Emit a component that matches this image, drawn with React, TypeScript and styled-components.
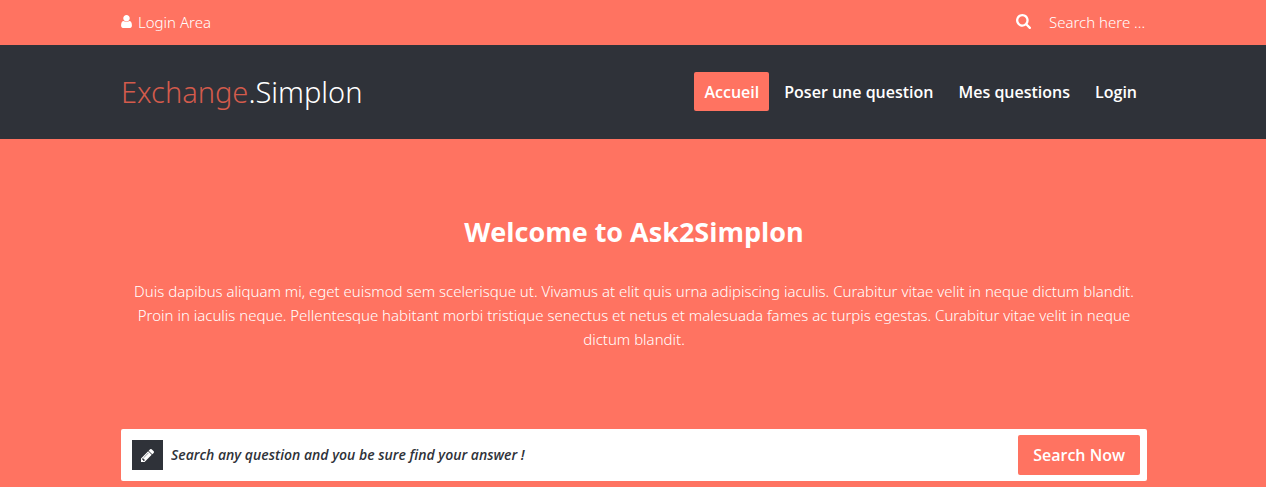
import React from "react";
import styled, { createGlobalStyle } from "styled-components";

const coral = "#ff7361";
const dark = "#2f3239";
const strongFont = `"Open Sans", sans-serif`;

const GlobalStyle = createGlobalStyle`
  * { box-sizing: border-box; }
  body {
    margin: 0;
    background: ${coral};
    color: #fff;
    font-family: "Noto Sans", "Open Sans", sans-serif;
    font-size: 15px;
    font-weight: 300;
  }
  a { color: inherit; text-decoration: none; }
  input, button { font-family: inherit; font-weight: inherit; border: 0; outline: 0; }
`;

const Container = styled.div`
  max-width: 1028px;
  margin: 0 auto;
  padding-left: 2px;
`;

const TopBar = styled(Container)`
  display: flex;
  justify-content: space-between;
  align-items: center;
  height: 45px;
  padding-bottom: 2px;
`;

const LoginLink = styled.a`
  display: flex;
  align-items: center;
  gap: 6px;
  line-height: 24px;
`;

const TopSearch = styled.label`
  display: flex;
  align-items: center;
  gap: 18px;
`;

const TopInput = styled.input`
  width: 98px;
  padding: 0;
  background: transparent;
  color: #fff;
  font-size: 15px;
  line-height: 24px;
  &::placeholder { color: #fff; opacity: 1; }
`;

const Icon = styled.svg`
  display: block;
  flex: none;
  fill: currentColor;
`;

const Header = styled.header`
  background: ${dark};
`;

const HeaderInner = styled(Container)`
  display: flex;
  justify-content: space-between;
  align-items: center;
  height: 94px;
`;

const Logo = styled.a`
  font-size: 29px;
  line-height: 40px;
`;

const LogoAccent = styled.span`
  color: #d35b4c;
`;

const Nav = styled.nav`
  display: flex;
  gap: 5px;
  padding-bottom: 1px;
`;

const NavLink = styled.a<{ $active?: boolean }>`
  padding: 1px 10px 0;
  border-radius: 2px;
  background: ${(p) => (p.$active ? coral : "transparent")};
  font-family: ${strongFont};
  font-size: 16px;
  font-weight: 600;
  line-height: 38px;
`;

const Hero = styled(Container)`
  padding-top: 72px;
  padding-bottom: 6px;
  text-align: center;
`;

const Title = styled.h1`
  margin: 0 0 27px;
  font-family: ${strongFont};
  font-size: 27px;
  font-weight: 700;
  line-height: 41px;
`;

const Intro = styled.p`
  margin: 0 0 78px;
  line-height: 24px;
`;

const AskForm = styled.form`
  display: flex;
  align-items: center;
  height: 52px;
  padding: 0 7px 0 11px;
  border-radius: 2px;
  background: #fff;
`;

const PencilBox = styled.span`
  display: flex;
  align-items: center;
  justify-content: center;
  width: 31px;
  height: 30px;
  background: ${dark};
`;

const AskInput = styled.input`
  flex: 1;
  min-width: 0;
  padding: 0 8px;
  background: transparent;
  color: ${dark};
  font-family: ${strongFont};
  font-size: 14px;
  font-style: italic;
  font-weight: 600;
  line-height: 24px;
`;

const AskButton = styled.button`
  height: 40px;
  padding: 0 15px;
  border-radius: 2px;
  background: ${coral};
  color: #fff;
  font-family: ${strongFont};
  font-size: 16px;
  font-weight: 600;
`;

const UserIcon = () => (
  <Icon viewBox="0 128 1280 1536" width="11" height="13" aria-hidden="true">
    <path d="M1280 1399q0 109-62.5 187t-150.5 78h-854q-88 0-150.5-78t-62.5-187q0-85 8.5-160.5t31.5-152 58.5-131 94-89 134.5-34.5q131 128 313 128t313-128q76 0 134.5 34.5t94 89 58.5 131 31.5 152 8.5 160.5zm-256-887q0 159-112.5 271.5t-271.5 112.5-271.5-112.5-112.5-271.5 112.5-271.5 271.5-112.5 271.5 112.5 112.5 271.5z" />
  </Icon>
);

const SearchIcon = () => (
  <Icon viewBox="0 128 1664 1664" width="15" height="15" aria-hidden="true">
    <path d="M1152 832q0-185-131.5-316.5t-316.5-131.5-316.5 131.5-131.5 316.5 131.5 316.5 316.5 131.5 316.5-131.5 131.5-316.5zm512 832q0 52-38 90t-90 38q-54 0-90-38l-343-342q-179 124-399 124-143 0-273.5-55.5t-225-150-150-225-55.5-273.5 55.5-273.5 150-225 225-150 273.5-55.5 273.5 55.5 225 150 150 225 55.5 273.5q0 220-124 399l343 343q37 37 37 90z" />
  </Icon>
);

const PencilIcon = () => (
  <Icon viewBox="0 149 1515 1515" width="13" height="13" aria-hidden="true">
    <path d="M363 1536l91-91-235-235-91 91v107h128v128h107zm523-928q0-22-22-22-10 0-17 7l-542 542q-7 7-7 17 0 22 22 22 10 0 17-7l542-542q7-7 7-17zm-54-192l416 416-832 832h-416v-416zm683 96q0 53-37 90l-166 166-416-416 166-165q36-38 90-38 53 0 91 38l235 234q37 39 37 91z" />
  </Icon>
);

const links = ["Accueil", "Poser une question", "Mes questions", "Login"];

export default function App() {
  return (
    <>
      <GlobalStyle />
      <TopBar>
        <LoginLink href="#">
          <UserIcon />
          Login Area
        </LoginLink>
        <TopSearch>
          <SearchIcon />
          <TopInput type="text" aria-label="Search" placeholder="Search here ..." />
        </TopSearch>
      </TopBar>
      <Header>
        <HeaderInner>
          <Logo href="#">
            <LogoAccent>Exchange</LogoAccent>.Simplon
          </Logo>
          <Nav>
            {links.map((label, i) => (
              <NavLink key={label} href="#" $active={i === 0}>
                {label}
              </NavLink>
            ))}
          </Nav>
        </HeaderInner>
      </Header>
      <Hero as="main">
        <Title>Welcome to Ask2Simplon</Title>
        <Intro>
          Duis dapibus aliquam mi, eget euismod sem scelerisque ut. Vivamus at elit quis urna
          adipiscing iaculis. Curabitur vitae velit in neque dictum blandit. Proin in iaculis
          neque. Pellentesque habitant morbi tristique senectus et netus et malesuada fames ac
          turpis egestas. Curabitur vitae velit in neque dictum blandit.
        </Intro>
        <AskForm>
          <PencilBox>
            <PencilIcon />
          </PencilBox>
          <AskInput
            type="text"
            aria-label="Your question"
            defaultValue="Search any question and you be sure find your answer !"
          />
          <AskButton type="button">Search Now</AskButton>
        </AskForm>
      </Hero>
    </>
  );
}
